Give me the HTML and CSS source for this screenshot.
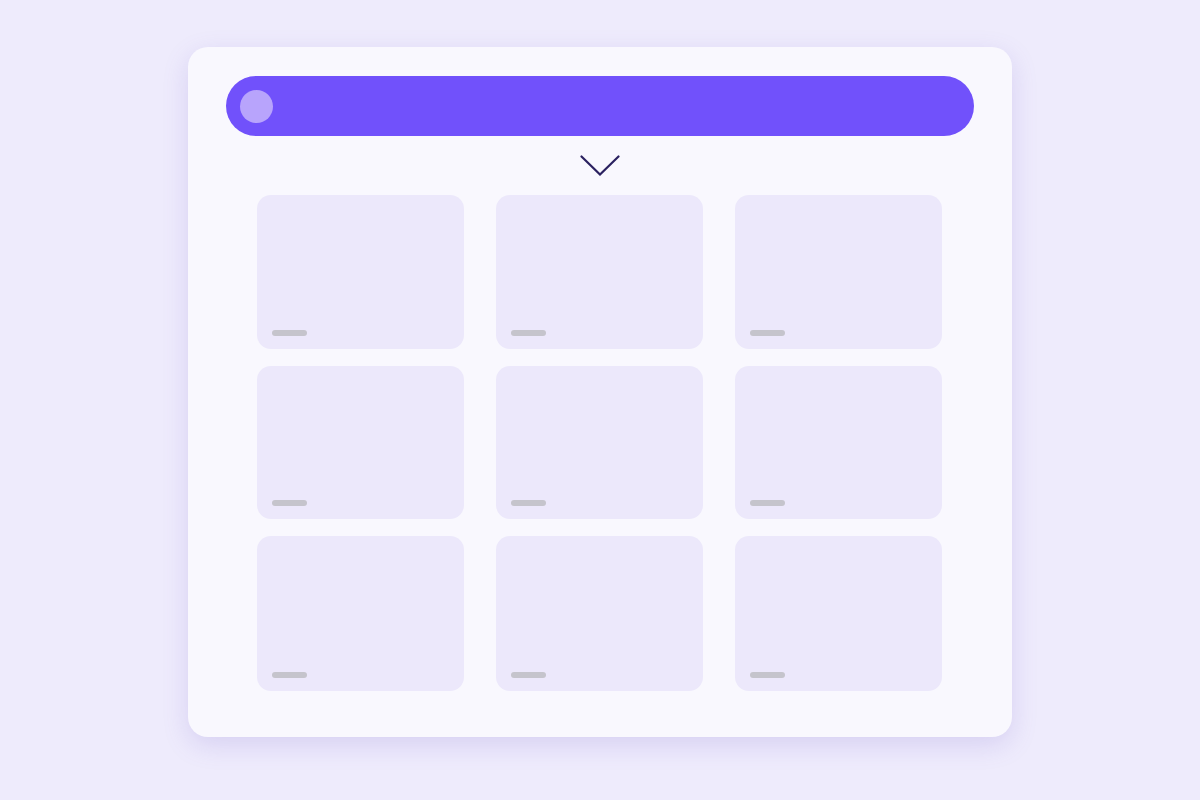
FILE: index.html
```html
<!DOCTYPE html>
<html>
<head>
<meta charset="utf-8">
<link rel="stylesheet" href="styles.css">
</head>
<body>
<div class="window">
  <div class="bar"><span class="knob"></span></div>
  <div class="chevron">
    <svg width="40" height="21" viewBox="0 0 40 21"><polyline points="1.5,1.5 20,19.5 38.5,1.5" fill="none" stroke="#2b2160" stroke-width="2.2" stroke-linecap="round" stroke-linejoin="miter"/></svg>
  </div>
  <div class="grid">
    <div class="tile"><span class="label"></span></div>
    <div class="tile"><span class="label"></span></div>
    <div class="tile"><span class="label"></span></div>
    <div class="tile"><span class="label"></span></div>
    <div class="tile"><span class="label"></span></div>
    <div class="tile"><span class="label"></span></div>
    <div class="tile"><span class="label"></span></div>
    <div class="tile"><span class="label"></span></div>
    <div class="tile"><span class="label"></span></div>
  </div>
</div>
</body>
</html>
```

FILE: styles.css
```css
html, body {
  margin: 0;
  padding: 0;
  background: #eeebfc;
  font-family: "Inter", sans-serif;
}
body {
  width: 1200px;
  height: 800px;
  overflow: hidden;
}
.window {
  box-sizing: border-box;
  width: 824px;
  height: 690px;
  margin: 47px auto 0;
  background: #f9f8fe;
  border-radius: 20px;
  box-shadow: 0 8px 26px rgba(110, 90, 200, 0.18);
  padding: 29px 38px 0;
}
.bar {
  height: 60px;
  border-radius: 30px;
  background: #7151fb;
  display: flex;
  align-items: center;
  padding-left: 14px;
}
.knob {
  width: 33px;
  height: 33px;
  border-radius: 50%;
  background: #b8a4fc;
}
.chevron {
  display: flex;
  justify-content: center;
  height: 59px;
  padding-top: 19px;
  box-sizing: border-box;
}
.grid {
  display: grid;
  grid-template-columns: repeat(3, 207px);
  grid-template-rows: 154px 153px 155px;
  column-gap: 32px;
  row-gap: 17px;
  margin-left: 31px;
}
.tile {
  background: #ece8fb;
  border-radius: 14px;
  display: flex;
  align-items: flex-end;
  padding: 0 0 13px 15px;
  box-sizing: border-box;
}
.label {
  width: 35px;
  height: 6px;
  border-radius: 3px;
  background: #c5c4cc;
}
```
